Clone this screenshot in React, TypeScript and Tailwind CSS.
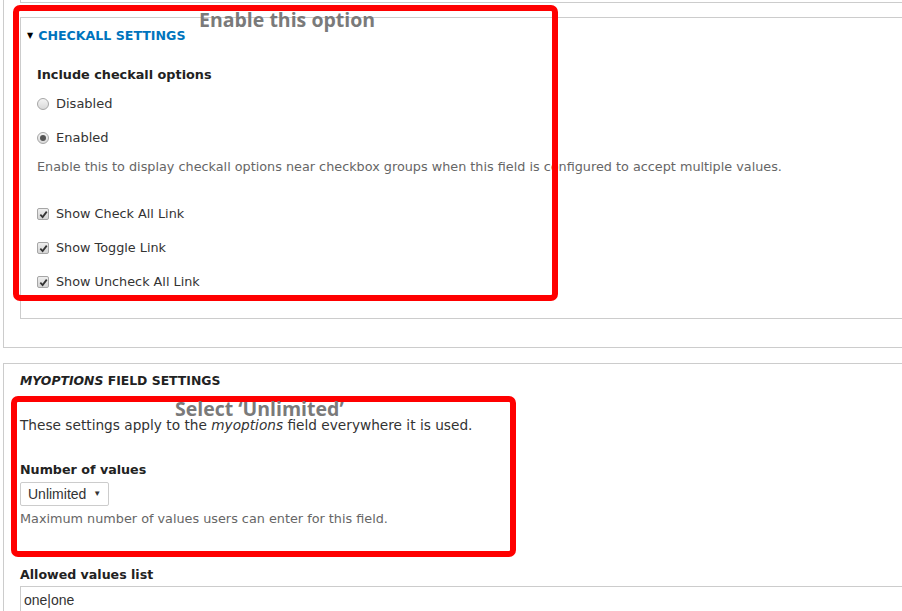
import React from 'react';

const BODY_FONT = { fontFamily: '"DejaVu Sans", Verdana, sans-serif' };

const Radio = ({ checked, label }: { checked?: boolean; label: string }) => (
  <div className="flex items-center h-[18px]">
    <span className="w-[12px] h-[12px] rounded-full border border-[#a6a6a6] bg-gradient-to-b from-[#f4f4f4] to-[#d9d9d9] flex items-center justify-center">
      {checked && <span className="w-[6px] h-[6px] rounded-full bg-[#555]" />}
    </span>
    <span className="ml-[7px] text-[13px] leading-[18px] text-[#333]">{label}</span>
  </div>
);

const Checkbox = ({ label }: { label: string }) => (
  <div className="flex items-center h-[18px]">
    <span className="w-[12px] h-[12px] rounded-[2px] border border-[#a6a6a6] bg-gradient-to-b from-[#eee] to-[#d4d4d4] flex items-center justify-center">
      <svg width="9" height="9" viewBox="0 0 10 10">
        <path d="M1.5 5.2 L4 7.8 L8.6 1.8" fill="none" stroke="#333" strokeWidth="2" />
      </svg>
    </span>
    <span className="ml-[7px] text-[12.8px] leading-[18px] text-[#333]">{label}</span>
  </div>
);

export default function App() {
  return (
    <div className="relative w-[902px] h-[611px] overflow-hidden bg-white" style={BODY_FONT}>
      {/* outer fieldset */}
      <div className="ml-[3px] border-l border-b border-[#ccc] pl-[16px] h-[348px]">
        <div className="h-[3px] border-l border-b border-[#ccc]" />
        <div className="mt-[14px] h-[302px] border-l border-t border-b border-[#ccc] pl-[6px] pt-[9px]">
          <div className="flex items-center h-[18px]">
            <span className="text-[8px] text-black leading-none">▼</span>
            <span className="ml-[5px] text-[12.6px] font-bold text-[#0074bd] uppercase leading-[18px]">
              Checkall settings
            </span>
          </div>
          <div className="pl-[10px]">
            <div className="mt-[21px] text-[12.8px] font-bold leading-[18px] text-[#222]">
              Include checkall options
            </div>
            <div className="mt-[11px]">
              <Radio label="Disabled" />
            </div>
            <div className="mt-[16px]">
              <Radio checked label="Enabled" />
            </div>
            <div className="mt-[12px] text-[12.8px] leading-[16px] text-[#666]">
              Enable this to display checkall options near checkbox groups when this field is configured to accept multiple values.
            </div>
            <div className="mt-[30px]">
              <Checkbox label="Show Check All Link" />
            </div>
            <div className="mt-[16px]">
              <Checkbox label="Show Toggle Link" />
            </div>
            <div className="mt-[16px]">
              <Checkbox label="Show Uncheck All Link" />
            </div>
          </div>
        </div>
      </div>

      {/* field settings */}
      <div className="mt-[15px] ml-[3px] border-l border-t border-[#ccc] pl-[16px] pt-[8px]">
        <div className="text-[12.4px] font-bold leading-[18px] text-[#222] uppercase">
          <em>myoptions</em> field settings
        </div>
        <div className="mt-[26px] text-[13.7px] leading-[18px] text-[#333]">
          These settings apply to the <em>myoptions</em> field everywhere it is used.
        </div>
        <div className="mt-[27px] text-[12.7px] font-bold leading-[18px] text-[#222]">Number of values</div>
        <div
          className="mt-[3px] w-[89px] h-[24px] border border-[#ccc] rounded-[2px] flex items-center pl-[7px] text-[14px] text-[#333]"
          style={{ fontFamily: '"Liberation Sans", Arial, sans-serif' }}
        >
          Unlimited
          <span className="ml-[7px] text-[8px]">▼</span>
        </div>
        <div className="mt-[5px] text-[12.8px] leading-[16px] text-[#666]">
          Maximum number of values users can enter for this field.
        </div>
        <div className="mt-[39px] text-[12.6px] font-bold leading-[18px] text-[#222]">Allowed values list</div>
        <div
          className="mt-[2px] h-[80px] border-l border-t border-[#ccc] pl-[3px] pt-[3px] text-[14px] leading-[20px] text-[#333]"
          style={{ fontFamily: '"Liberation Sans", Arial, sans-serif' }}
        >
          one|one
        </div>
      </div>

      {/* annotations */}
      <div className="absolute left-[13px] top-[5px] w-[545px] h-[296px] border-[6px] border-[#f00] rounded-[7px]" />
      <div
        className="absolute left-[199px] top-[7px] text-[19.5px] font-bold text-[#7a7a7a] leading-[26px]"
        style={{ fontFamily: '"Open Sans", Lato, sans-serif' }}
      >
        Enable this option
      </div>
      <div className="absolute left-[11px] top-[396px] w-[505px] h-[161px] border-[6px] border-[#f00] rounded-[7px]" />
      <div
        className="absolute left-[175px] top-[396px] text-[19.5px] font-bold text-[#7a7a7a] leading-[26px]"
        style={{ fontFamily: '"Open Sans", Lato, sans-serif' }}
      >
        Select ‘Unlimited’
      </div>
    </div>
  );
}
